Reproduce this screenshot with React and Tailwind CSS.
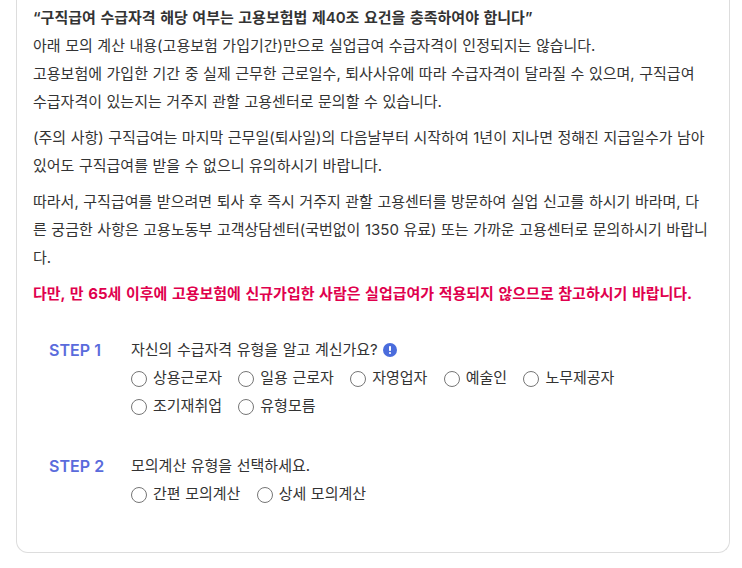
import React from "react";

const STEPS = [
  {
    label: "STEP 1",
    question: "자신의 수급자격 유형을 알고 계신가요?",
    hasInfo: true,
    options: ["상용근로자", "일용 근로자", "자영업자", "예술인", "노무제공자", "조기재취업", "유형모름"],
  },
  {
    label: "STEP 2",
    question: "모의계산 유형을 선택하세요.",
    hasInfo: false,
    options: ["간편 모의계산", "상세 모의계산"],
  },
];

const InfoIcon = () => (
  <svg viewBox="0 0 14 14" className="ml-[5px] h-[14px] w-[14px] shrink-0">
    <circle cx="7" cy="7" r="7" fill="#4a6cdc" />
    <rect x="6" y="3" width="2" height="5" rx="0.8" fill="#fff" />
    <circle cx="7" cy="10" r="1.1" fill="#fff" />
  </svg>
);

const RadioOption = ({ label }) => (
  <label className="flex h-7 items-center">
    <span className="mt-[2px] h-4 w-4 rounded-full border border-[#767676] bg-white" />
    <span className="ml-[6px]">{label}</span>
  </label>
);

const Step = ({ step }) => (
  <div className="flex">
    <div className="w-[82px] shrink-0 text-[16px] leading-7 font-semibold text-[#5a6bdc]">
      {step.label}
    </div>
    <div className="flex-1">
      <div className="flex h-7 items-center">
        {step.question}
        {step.hasInfo ? <InfoIcon /> : null}
      </div>
      <div className="flex w-[520px] flex-wrap gap-x-[16.3px]">
        {step.options.map((option) => (
          <RadioOption key={option} label={option} />
        ))}
      </div>
    </div>
  </div>
);

export default function App() {
  return (
    <div className="h-[568px] overflow-hidden bg-white font-['Inter','Noto_Sans_CJK_KR',sans-serif] text-[15px] leading-7 text-[#333] [word-spacing:0.35px]">
      <div className="ml-4 h-[553px] w-[714px] rounded-b-xl border-x border-b border-[#ddd] pt-1 pr-[19px] pl-4">
        <p className="font-semibold [word-spacing:0.8px]">
          “구직급여 수급자격 해당 여부는 고용보험법 제40조 요건을 충족하여야 합니다”
        </p>
        <p>아래 모의 계산 내용(고용보험 가입기간)만으로 실업급여 수급자격이 인정되지는 않습니다.</p>
        <p>
          고용보험에 가입한 기간 중 실제 근무한 근로일수, 퇴사사유에 따라 수급자격이 달라질 수 있으며, 구직급여
          수급자격이 있는지는 거주지 관할 고용센터로 문의할 수 있습니다.
        </p>
        <p className="mt-2">
          (주의 사항) 구직급여는 마지막 근무일(퇴사일)의 다음날부터 시작하여 1년이 지나면 정해진 지급일수가 남아
          있어도 구직급여를 받을 수 없으니 유의하시기 바랍니다.
        </p>
        <p className="mt-2">
          따라서, 구직급여를 받으려면 퇴사 후 즉시 거주지 관할 고용센터를 방문하여 실업 신고를 하시기 바라며, 다른
          궁금한 사항은 고용노동부 고객상담센터(국번없이 1350 유료) 또는 가까운 고용센터로 문의하시기 바랍니다.
        </p>
        <p className="mt-2 font-bold text-[#e0004d] [word-spacing:1.05px]">
          다만, 만 65세 이후에 고용보험에 신규가입한 사람은 실업급여가 적용되지 않으므로 참고하시기 바랍니다.
        </p>
        <div className="mt-[28px] flex flex-col gap-[32px] pl-4">
          {STEPS.map((step) => (
            <Step key={step.label} step={step} />
          ))}
        </div>
      </div>
    </div>
  );
}
